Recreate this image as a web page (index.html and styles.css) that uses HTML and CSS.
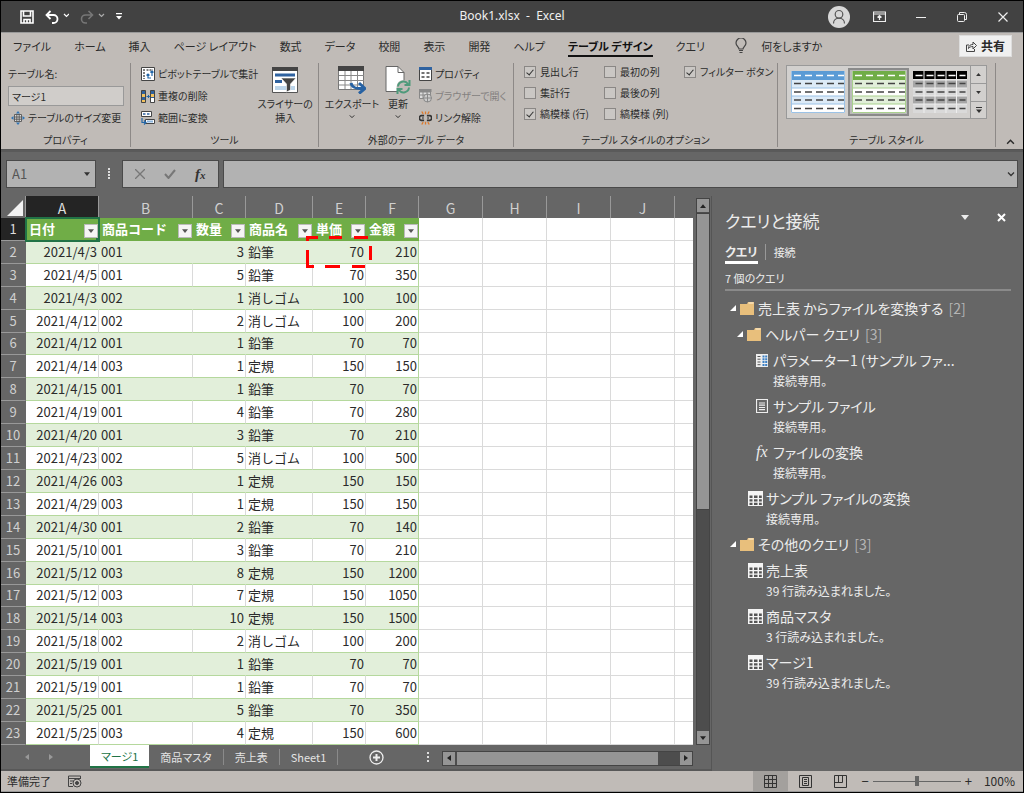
FILE: index.html
```html
<!DOCTYPE html>
<html lang="ja">
<head>
<meta charset="utf-8">
<title>Book1.xlsx - Excel</title>
<link rel="stylesheet" href="styles.css">
</head>
<body>
<svg class="defs" aria-hidden="true">
  <symbol id="caret" viewBox="0 0 8 5"><path d="M0 0h8L4 5z" fill="currentColor"/></symbol>
  <symbol id="chev" viewBox="0 0 8 5"><path d="M1 1l3 3 3-3" fill="none" stroke="currentColor" stroke-width="1.3"/></symbol>
  <symbol id="folder" viewBox="0 0 14 13"><path d="M0 2h7l1-2h6v13H0z" fill="#e8bf7c"/><path d="M8.500 1h5" stroke="#fff3dc"/></symbol>
  <symbol id="grid" viewBox="0 0 15 15"><path d="M0 0h15v15H0z" fill="#f5f5f5"/><path d="M1.500 4.500h3v2.500h-3zM6 4.500h3.500v2.500H6zM11 4.500h2.800v2.500H11zM1.500 8.200h3v2.300h-3zM6 8.200h3.500v2.300H6zM11 8.200h2.800v2.300H11zM1.500 11.700h3V14h-3zM6 11.700h3.500V14H6zM11 11.700h2.800V14H11z" fill="#555"/></symbol>
  <symbol id="node" viewBox="0 0 6 6"><path d="M6 0v6H0z" fill="#fff"/></symbol>
</svg>
<div class="app">
  <header class="titlebar">
    <div class="quick">
      <button aria-label="上書き保存"><svg width="14" height="14" viewBox="0 0 14 14" fill="none" stroke="#fff" stroke-width="1.600"><path d="M1 1h12v12H1zM3.500 1v5h7V1M4 13V9.500h6V13M7 10v3"/></svg></button>
      <button aria-label="元に戻す"><svg width="24" height="14" viewBox="0 0 24 14" fill="none" stroke="#fff" stroke-width="1.800"><path d="M5.500 1L1.500 5l4 4M2 5h6.500a4 4 0 0 1 0 8H7"/><path d="M19 4l2.500 2.500L24 4" stroke-width="1.200"/></svg></button>
      <button aria-label="やり直し"><svg width="25" height="14" viewBox="0 0 25 14" fill="none" stroke="#777" stroke-width="1.600"><path d="M8.500 1l4 4-4 4M12 5H5.500a4 4 0 0 0 0 8H7"/><path d="M19 4l2.500 2.500L24 4" stroke="#aaa" stroke-width="1.200"/></svg></button>
      <button aria-label="クイック アクセス ツール バーのカスタマイズ"><svg width="6" height="7" viewBox="0 0 6 7" fill="#fff"><path d="M0 0h6v1.300H0zM0 3h6L3 6.500z"/></svg></button>
    </div>
    <div class="doc-title">Book1.xlsx&nbsp; -&nbsp; Excel</div>
    <div class="window-buttons">
      <button class="avatar" aria-label="アカウント"><svg width="22" height="22" viewBox="0 0 22 22"><circle cx="11" cy="11" r="11" fill="#d8d8d8"/><g fill="none" stroke="#555" stroke-width="1.200"><circle cx="11" cy="8.300" r="3.800"/><path d="M5.500 17.500c0-7 11-7 11 0"/></g></svg></button>
      <button aria-label="リボンの表示オプション"><svg width="13" height="11" viewBox="0 0 13 11" fill="none" stroke="#eee"><path d="M.5 1h12v9.500H.5zM.5 3h12M6.500 9V5M4.500 6.500l2-2 2 2" stroke-width="1.200"/></svg></button>
      <button aria-label="最小化"><svg width="10" height="10"><path d="M0 5.500h10" stroke="#eee"/></svg></button>
      <button aria-label="元に戻す (縮小)"><svg width="10" height="10" viewBox="0 0 10 10" fill="none" stroke="#eee"><rect x=".5" y="2.500" width="7" height="7" rx="1"/><path d="M2.500 2V.5h5a2 2 0 0 1 2 2v5H8"/></svg></button>
      <button aria-label="閉じる"><svg width="10" height="10" viewBox="0 0 10 10"><path d="M.5.5l9 9M9.500.5l-9 9" stroke="#eee" stroke-width="1.200"/></svg></button>
    </div>
  </header>

  <nav class="tabs">
    <button>ファイル</button><button>ホーム</button><button>挿入</button><button>ページ レイアウト</button><button>数式</button><button>データ</button><button>校閲</button><button>表示</button><button>開発</button><button>ヘルプ</button><button class="current">テーブル デザイン</button><button>クエリ</button>
    <button class="tell"><svg width="12" height="16" viewBox="0 0 12 16" fill="none" stroke="#444" stroke-width="1.200"><path d="M4 11c0-2-3-3-3-6a5 5 0 0 1 10 0c0 3-3 4-3 6zM4 12.500h4M4.500 14.500h3"/></svg>何をしますか</button>
    <button class="share"><svg width="11" height="11" viewBox="0 0 11 11" fill="none" stroke="#444"><path d="M3 4H.5v6.500h8V8M2.500 7.500c0-3 2-4 4.500-4V1l3.500 3.500L7 8V5.500c-2 0-3.500.5-4.500 2z"/></svg>共有</button>
  </nav>

  <section class="ribbon">
    <div class="group g-prop">
      <div class="body stack">
        <label for="tname">テーブル名:</label>
        <input id="tname" class="tname" value="マージ1">
        <button class="cmd"><svg width="14" height="14" viewBox="0 0 14 14"><path d="M7 0l2 2.500H5zM7 14l2-2.500H5zM0 7l2.500-2v4zM14 7l-2.500-2v4z" fill="#2f74b5"/><path d="M3.500 3.500h7v7h-7zM3.500 6h7M3.500 8.200h7M5.800 3.500v7M8.200 3.500v7" fill="#ddd" stroke="#555" stroke-width=".9"/></svg>テーブルのサイズ変更</button>
      </div>
      <div class="caption">プロパティ</div>
    </div>
    <div class="group g-tool">
      <div class="body">
        <div class="stack">
          <button class="cmd"><svg width="14" height="14" viewBox="0 0 14 14"><path d="M.5.5h13v13H.5z" fill="#fff" stroke="#444"/><path d="M2 3h2M5.500 3H12M3 5v7" stroke="#555" stroke-width="1.500" stroke-dasharray="2 1"/><path d="M7 7v4h3M11 9V5H9M5.500 8.500L7 7l1.500 1.500M9.500 5.500L11 4l1.500 1.500" fill="none" stroke="#2266a8" stroke-width="1.200"/></svg>ピボットテーブルで集計</button>
          <button class="cmd"><svg width="14" height="13" viewBox="0 0 14 13"><path d="M.5.5h4v12h-4zM9.500.5h4v12h-4z" fill="#2f62a0" stroke="#444"/><path d="M1 4h3v3H1zM1 10h3v2H1zM10 4h3v3h-3z" fill="#f3c25f"/><path d="M10 8h3v4h-3z" fill="#fff"/><path d="M5.500 6.500h3M7 5l1.500 1.500L7 8" fill="none" stroke="#2266a8"/></svg>重複の削除</button>
          <button class="cmd"><svg width="14" height="14" viewBox="0 0 14 14"><path d="M.5.5h10v5H.5zM4.500 8.500h9v4h-9z" fill="#fff" stroke="#444"/><path d="M2 3h2.500M6 3h2.500" stroke="#2f62a0" stroke-width="1.500"/><path d="M6 10.500h6" stroke="#8cb4dc" stroke-width="2"/><path d="M1 7v4.500h3.500M3 9.500l2 2-2 2" fill="none" stroke="#2266a8" stroke-width="1.200"/></svg>範囲に変換</button>
        </div>
        <button class="big"><svg width="26" height="26" viewBox="0 0 26 26"><path d="M.5.5h25v25H.5z" fill="#fff" stroke="#555"/><path d="M0 0h26v4H0z" fill="#444"/><path d="M3 6.500h20v3H3zM3 13h7v3H3z" fill="#2f62a0"/><path d="M3 19h20v4H3z" fill="#bcd5ea"/><path d="M9 11h15l-5.500 6v6l-4 2v-8z" fill="#444" stroke="#fff" stroke-width=".6"/></svg><span>スライサーの<br>挿入</span></button>
      </div>
      <div class="caption">ツール</div>
    </div>
    <div class="group g-ext">
      <div class="body">
        <button class="big"><svg width="28" height="28" viewBox="0 0 28 28"><path d="M.5.5h25v23H.5z" fill="#fff" stroke="#777"/><path d="M0 0h26v5H0z" fill="#444"/><path d="M1 9.500h25M1 14.500h25M1 19h25M7 5v18M13 5v18M19.500 5v18" stroke="#888"/><path d="M13 17c1 5 5 6 12 5.500M21 17l6 5.500-6 5" fill="none" stroke="#2762a3" stroke-width="3"/></svg><span>エクスポート</span><svg class="down" width="6" height="4"><use href="#chev"/></svg></button>
        <button class="big slim"><svg width="26" height="28" viewBox="0 0 26 28"><path d="M1 .5h12l6 6v19H1z" fill="#fff" stroke="#666"/><path d="M13 .5v6h6" fill="none" stroke="#666"/><circle cx="18.500" cy="21" r="7" fill="#c0bbb7"/><path d="M13 20.500a5.500 5.500 0 0 1 10-2.500M24 21.500a5.500 5.500 0 0 1-10 2.500M24.500 14v5h-5M12.500 28v-5h5" fill="none" stroke="#4f9a7b" stroke-width="2"/></svg><span>更新</span><svg class="down" width="6" height="4"><use href="#chev"/></svg></button>
        <div class="stack">
          <button class="cmd"><svg width="13" height="14" viewBox="0 0 13 14"><path d="M.5.5h12v13H.5z" fill="#fff" stroke="#444"/><path d="M0 0h13v3H0z" fill="#2f62a0"/><path d="M2.500 6h3M2.500 10h3M7.500 6h3M7.500 10h3" stroke="#444" stroke-width="1.500"/></svg>プロパティ</button>
          <button class="cmd" disabled><svg width="13" height="14" viewBox="0 0 13 14"><path d="M.5.5h11v9H.5z" fill="#ddd" stroke="#888"/><path d="M0 0h12v3H0zM4 3v6M8 3v6M1 6h11" fill="#888" stroke="#888"/><circle cx="8.500" cy="9" r="4" fill="#ccc" stroke="#888"/><path d="M4.500 9h8M8.500 5v8" stroke="#888"/></svg>ブラウザーで開く</button>
          <button class="cmd"><svg width="13" height="14" viewBox="0 0 14 14" fill="none"><path d="M5.500 4.500h-3a2 2 0 0 0-2 2v1a2 2 0 0 0 2 2h3M8.500 4.500h3a2 2 0 0 1 2 2v1a2 2 0 0 1-2 2h-3M3.500 7h1.500M9 7h1.500" stroke="#333" stroke-width="1.800"/><path d="M7 0v3M3 0l1.500 2.500M11 0L9.500 2.500M7 14v-3M3 14l1.500-2.500M11 14l-1.500-2.500" stroke="#dd7a2c" stroke-width="1.400"/></svg>リンク解除</button>
        </div>
      </div>
      <div class="caption">外部のテーブル データ</div>
    </div>
    <div class="group g-opt">
      <div class="body checks">
        <label><input type="checkbox" checked>見出し行</label>
        <label><input type="checkbox">最初の列</label>
        <label><input type="checkbox" checked>フィルター ボタン</label>
        <label><input type="checkbox">集計行</label>
        <label><input type="checkbox">最後の列</label><i></i>
        <label><input type="checkbox" checked>縞模様 (行)</label>
        <label><input type="checkbox">縞模様 (列)</label>
      </div>
      <div class="caption">テーブル スタイルのオプション</div>
    </div>
    <div class="group g-style">
      <div class="body">
        <div class="gallery">
          <button aria-label="青"><svg width="54" height="42" viewBox="0 0 54 42"><path d="M0 0h54v42H0z" fill="#fff"/><path d="M0 0h54v9H0z" fill="#5b9bd5"/><path d="M0 9h54v8H0zM0 25h54v8H0z" fill="#ddebf7"/><path d="M.5 0v41.500h53V0M0 17h54M0 25h54M0 33h54" fill="none" stroke="#9bc2e6"/><path d="M3 4.500h50" stroke="#fff" stroke-dasharray="7 4" stroke-width="1.500"/><path d="M3 12.500h50M3 21h50M3 29h50M3 37.500h50" stroke="#444" stroke-dasharray="7 4" stroke-width="1.500"/></svg></button>
          <button class="chosen" aria-label="緑"><svg width="54" height="42" viewBox="0 0 54 42"><path d="M0 0h54v42H0z" fill="#fff"/><path d="M0 0h54v9H0z" fill="#70ad47"/><path d="M0 9h54v8H0zM0 25h54v8H0z" fill="#e2efda"/><path d="M.5 0v41.500h53V0M0 17h54M0 25h54M0 33h54" fill="none" stroke="#a9d08e"/><path d="M3 4.500h50" stroke="#fff" stroke-dasharray="7 4" stroke-width="1.500"/><path d="M3 12.500h50M3 21h50M3 29h50M3 37.500h50" stroke="#444" stroke-dasharray="7 4" stroke-width="1.500"/></svg></button>
          <button aria-label="黒"><svg width="54" height="42" viewBox="0 0 54 42"><path d="M0 0h54v42H0z" fill="#d9d9d9"/><path d="M0 9h54v8H0zM0 25h54v8H0z" fill="#a6a6a6"/><path d="M0 0h54v8H0z" fill="#000"/><path d="M11 0v42M22 0v42M33 0v42M43.500 0v42M0 9h54M0 17h54M0 25h54M0 33h54" stroke="#eee"/><path d="M2.500 4.500h50" stroke="#fff" stroke-dasharray="7 4" stroke-width="1.500"/><path d="M2.500 12.500h50M2.500 21h50M2.500 29h50M2.500 37.500h50" stroke="#444" stroke-dasharray="7 4" stroke-width="1.500"/></svg></button>
          <div class="pager">
            <button aria-label="前へ"><svg class="flip" width="5" height="3"><use href="#caret"/></svg></button>
            <button aria-label="次へ"><svg width="5" height="3"><use href="#caret"/></svg></button>
            <button aria-label="その他"><svg width="6" height="6" viewBox="0 0 6 6"><path d="M0 0h6v1H0zM0 2.500h6L3 6z" fill="#333"/></svg></button>
          </div>
        </div>
      </div>
      <div class="caption">テーブル スタイル</div>
    </div>
    <button class="collapse" aria-label="リボンを折りたたむ"><svg class="flip" width="9" height="6"><use href="#chev"/></svg></button>
  </section>

  <section class="formula">
    <div class="field namebox"><input aria-label="名前ボックス" value="A1"><svg width="6" height="4"><use href="#caret"/></svg></div>
    <svg class="dots" width="2" height="12"><path d="M1 0v12" stroke="#ddd" stroke-width="2" stroke-dasharray="2 1"/></svg>
    <div class="field fxbox">
      <button aria-label="キャンセル"><svg width="10" height="10"><path d="M0 0l10 10M10 0L0 10" stroke="#777" stroke-width="1.300"/></svg></button>
      <button aria-label="入力"><svg width="12" height="10"><path d="M1 5l3.500 4L11 1" fill="none" stroke="#777" stroke-width="2"/></svg></button>
      <button class="fx" aria-label="関数の挿入">f<small>x</small></button>
    </div>
    <div class="field bar"><input aria-label="数式バー"><svg width="8" height="6"><use href="#chev"/></svg></div>
  </section>

  <main class="work">
    <section class="left">
      <div class="sheet-row">
        <div class="sheet">
        <table>
          <colgroup><col class="c0"><col class="ca"><col class="cb"><col class="cc"><col class="cd"><col class="cc"><col class="cc"><col class="cg"><col class="cg"><col class="cg"><col class="cg"><col></colgroup>
          <thead><tr><th class="corner"><svg width="16" height="16"><path d="M16 0v16H0z" fill="#f2f2f2"/></svg></th><th class="on">A</th><th>B</th><th>C</th><th>D</th><th>E</th><th>F</th><th>G</th><th>H</th><th>I</th><th>J</th><th></th></tr></thead>
          <tbody>
            <tr class="head"><th class="on">1</th><td class="active"><div>日付<button aria-label="日付"><svg width="6" height="4"><use href="#caret"/></svg></button></div></td><td><div>商品コード<button aria-label="商品コード"><svg width="6" height="4"><use href="#caret"/></svg></button></div></td><td><div>数量<button aria-label="数量"><svg width="6" height="4"><use href="#caret"/></svg></button></div></td><td><div>商品名<button aria-label="商品名"><svg width="6" height="4"><use href="#caret"/></svg></button></div></td><td><div>単価<button aria-label="単価"><svg width="6" height="4"><use href="#caret"/></svg></button></div></td><td><div>金額<button aria-label="金額"><svg width="6" height="4"><use href="#caret"/></svg></button></div></td><td><td><td><td><td></tr>
            <tr><th>2<td>2021/4/3<td>001<td>3<td>鉛筆<td class="marked">70<svg class="marker" width="66" height="32" viewBox="0 0 66 32"><path d="M0 1.500h12M23 1.500h13M48 1.500h14M0 30.500h8M19 30.500h15M46 30.500h13M1.500 1v4M1.500 14v16M64.500 10v14" stroke="#f00" stroke-width="3"/></svg><td>210<td><td><td><td><td></tr>
            <tr><th>3<td>2021/4/5<td>001<td>5<td>鉛筆<td>70<td>350<td><td><td><td><td></tr>
            <tr><th>4<td>2021/4/3<td>002<td>1<td>消しゴム<td>100<td>100<td><td><td><td><td></tr>
            <tr><th>5<td>2021/4/12<td>002<td>2<td>消しゴム<td>100<td>200<td><td><td><td><td></tr>
            <tr><th>6<td>2021/4/12<td>001<td>1<td>鉛筆<td>70<td>70<td><td><td><td><td></tr>
            <tr><th>7<td>2021/4/14<td>003<td>1<td>定規<td>150<td>150<td><td><td><td><td></tr>
            <tr><th>8<td>2021/4/15<td>001<td>1<td>鉛筆<td>70<td>70<td><td><td><td><td></tr>
            <tr><th>9<td>2021/4/19<td>001<td>4<td>鉛筆<td>70<td>280<td><td><td><td><td></tr>
            <tr><th>10<td>2021/4/20<td>001<td>3<td>鉛筆<td>70<td>210<td><td><td><td><td></tr>
            <tr><th>11<td>2021/4/23<td>002<td>5<td>消しゴム<td>100<td>500<td><td><td><td><td></tr>
            <tr><th>12<td>2021/4/26<td>003<td>1<td>定規<td>150<td>150<td><td><td><td><td></tr>
            <tr><th>13<td>2021/4/29<td>003<td>1<td>定規<td>150<td>150<td><td><td><td><td></tr>
            <tr><th>14<td>2021/4/30<td>001<td>2<td>鉛筆<td>70<td>140<td><td><td><td><td></tr>
            <tr><th>15<td>2021/5/10<td>001<td>3<td>鉛筆<td>70<td>210<td><td><td><td><td></tr>
            <tr><th>16<td>2021/5/12<td>003<td>8<td>定規<td>150<td>1200<td><td><td><td><td></tr>
            <tr><th>17<td>2021/5/12<td>003<td>7<td>定規<td>150<td>1050<td><td><td><td><td></tr>
            <tr><th>18<td>2021/5/14<td>003<td>10<td>定規<td>150<td>1500<td><td><td><td><td></tr>
            <tr><th>19<td>2021/5/18<td>002<td>2<td>消しゴム<td>100<td>200<td><td><td><td><td></tr>
            <tr><th>20<td>2021/5/19<td>001<td>1<td>鉛筆<td>70<td>70<td><td><td><td><td></tr>
            <tr><th>21<td>2021/5/19<td>001<td>1<td>鉛筆<td>70<td>70<td><td><td><td><td></tr>
            <tr><th>22<td>2021/5/25<td>001<td>5<td>鉛筆<td>70<td>350<td><td><td><td><td></tr>
            <tr><th>23<td>2021/5/25<td>003<td>4<td>定規<td>150<td>600<td><td><td><td><td></tr>
          </tbody>
        </table>
        </div>
        <div class="vscroll">
          <button aria-label="上へ"><svg class="flip" width="6" height="4"><use href="#caret"/></svg></button>
          <div class="thumb"></div><div class="track"></div>
          <button aria-label="下へ"><svg width="6" height="4"><use href="#caret"/></svg></button>
        </div>
      </div>
      <div class="sheet-tabs">
        <div class="nav">
          <button aria-label="前のシート"><svg width="4" height="6"><path d="M4 0v6L0 3z" fill="#999"/></svg></button>
          <button aria-label="次のシート"><svg width="4" height="6"><path d="M0 0v6l4-3z" fill="#999"/></svg></button>
        </div>
        <button class="tab current">マージ1</button><button class="tab">商品マスタ</button><button class="tab">売上表</button><button class="tab">Sheet1</button>
        <button class="add" aria-label="新しいシート"><svg width="15" height="15" viewBox="0 0 15 15" fill="none" stroke="#eee"><circle cx="7.500" cy="7.500" r="6.500" stroke-width="1.300"/><path d="M7.500 4v7M4 7.500h7" stroke-width="2"/></svg></button>
        <svg class="dots" width="2" height="10"><path d="M1 0v10" stroke="#ddd" stroke-width="2" stroke-dasharray="2 2"/></svg>
        <div class="hscroll">
          <button aria-label="左へ"><svg width="4" height="6"><path d="M4 0v6L0 3z" fill="#222"/></svg></button>
          <div class="thumb"></div><div class="track"></div>
          <button aria-label="右へ"><svg width="4" height="6"><path d="M0 0v6l4-3z" fill="#222"/></svg></button>
        </div>
      </div>
    </section>

    <aside class="panel">
      <div class="panel-head"><h2>クエリと接続</h2>
        <button aria-label="オプション"><svg width="8" height="5"><use href="#caret"/></svg></button>
        <button aria-label="閉じる"><svg width="9" height="9" viewBox="0 0 9 9"><path d="M1 1l7 7M8 1L1 8" stroke="#fff" stroke-width="2"/></svg></button>
      </div>
      <div class="panel-tabs"><button class="current">クエリ</button><button>接続</button></div>
      <p class="count">7 個のクエリ</p>
      <ul class="tree">
        <li><div class="row"><svg class="tw" width="6" height="6"><use href="#node"/></svg><svg width="14" height="13"><use href="#folder"/></svg><span>売上表 からファイルを変換する <em>[2]</em></span></div>
          <ul>
            <li><div class="row"><svg class="tw" width="6" height="6"><use href="#node"/></svg><svg width="14" height="13"><use href="#folder"/></svg><span>ヘルパー クエリ <em>[3]</em></span></div>
              <ul>
                <li class="leaf"><div class="row"><svg width="12" height="13" viewBox="0 0 12 13"><path d="M0 0h12v13H0z" fill="#eee"/><path d="M1.500 2.500h3M1.500 5.200h3M1.500 8h3M1.500 10.700h3" stroke="#555"/><path d="M6.500 1.500h2v2h-2zM9.200 1.500h2v2h-2zM6.500 4.300h2v2h-2zM9.200 4.300h2v2h-2zM6.500 7.100h2v2h-2zM9.200 7.100h2v2h-2zM6.500 10h2v2h-2zM9.200 10h2v2h-2z" fill="#3b7fc4"/></svg><span>パラメーター1 (サンプル ファ...</span></div><p>接続専用。</p></li>
                <li class="leaf"><div class="row"><svg width="12" height="14" viewBox="0 0 12 14" fill="none" stroke="#eee"><path d="M.5.5h11v13H.5zM3 4h6M3 6.200h6M3 8.500h6M3 10.700h6" stroke-width="1.200"/></svg><span>サンプル ファイル</span></div><p>接続専用。</p></li>
                <li class="leaf"><div class="row"><i class="fn">fx</i><span>ファイルの変換</span></div><p>接続専用。</p></li>
              </ul>
            </li>
            <li class="leaf"><div class="row"><svg width="15" height="15"><use href="#grid"/></svg><span>サンプル ファイルの変換</span></div><p>接続専用。</p></li>
          </ul>
        </li>
        <li><div class="row"><svg class="tw" width="6" height="6"><use href="#node"/></svg><svg width="14" height="13"><use href="#folder"/></svg><span>その他のクエリ <em>[3]</em></span></div>
          <ul>
            <li class="leaf"><div class="row"><svg width="15" height="15"><use href="#grid"/></svg><span>売上表</span></div><p>39 行読み込まれました。</p></li>
            <li class="leaf"><div class="row"><svg width="15" height="15"><use href="#grid"/></svg><span>商品マスタ</span></div><p>3 行読み込まれました。</p></li>
            <li class="leaf"><div class="row"><svg width="15" height="15"><use href="#grid"/></svg><span>マージ1</span></div><p>39 行読み込まれました。</p></li>
          </ul>
        </li>
      </ul>
    </aside>
  </main>

  <footer class="status">
    <span>準備完了</span>
    <button class="macro" aria-label="マクロの記録"><svg width="14" height="13" viewBox="0 0 14 13" fill="none" stroke="#444"><path d="M5 11.500H.5V1h12v3M.5 3.500h12M2 6h3M2 8.500h2"/><circle cx="9" cy="8" r="4"/><circle cx="9" cy="8" r="1.500" fill="#444"/></svg></button>
    <div class="views">
      <button class="current" aria-label="標準"><svg width="13" height="13" viewBox="0 0 13 13" fill="none" stroke="#333"><path d="M.5.5h12v12H.5zM.5 4.500h12M.5 8.500h12M4.500.5v12M8.500.5v12"/></svg></button>
      <button aria-label="ページ レイアウト"><svg width="13" height="13" viewBox="0 0 13 13" fill="none" stroke="#333"><path d="M.5.5h12v12H.5zM3.500 2.500h6v8h-6zM5 4.500h3M5 6.500h3M5 8.500h3"/></svg></button>
      <button aria-label="改ページ プレビュー"><svg width="13" height="13" viewBox="0 0 13 13" fill="none" stroke="#333"><path d="M.5.5h12v12H.5zM.5 7.500h8v-7M4.500.5v7"/></svg></button>
    </div>
    <div class="zoom"><button aria-label="縮小">−</button><input type="range" aria-label="ズーム" min="0" max="100" value="50"><button aria-label="拡大">+</button><span>100%</span></div>
  </footer>
</div>
</body>
</html>
```
FILE: styles.css
```css
* { box-sizing: border-box; }
body { margin: 0; background: #000; color: #2b2b2b; font: 11px/14px "Noto Sans CJK JP", sans-serif; font-feature-settings: "palt"; }
button, input { font: inherit; font-feature-settings: inherit; color: inherit; background: none; border: 0; padding: 0; margin: 0; }
svg { display: block; flex: none; }
ul, p, h2 { margin: 0; padding: 0; list-style: none; }
.defs { position: absolute; width: 0; height: 0; }
.flip { transform: rotate(180deg); }

.app { min-height: 100vh; display: flex; flex-direction: column; border: 1px solid #000; background: #666; }

.titlebar { height: 31px; display: grid; grid-template-columns: 1fr auto 1fr; align-items: center; background: #424242; color: #f0f0f0; }
.quick { display: flex; align-items: center; gap: 11px; padding-left: 19px; }
.doc-title { font: 12px/16px "Noto Sans", sans-serif; padding-bottom: 2px; }
.window-buttons { display: flex; align-items: center; justify-content: flex-end; }
.window-buttons button { width: 41px; display: flex; justify-content: center; }

.tabs { height: 29px; display: flex; align-items: center; gap: 23px; padding: 0 11px 2px 12px; background: #c0bbb7; white-space: nowrap; border-top: 1px solid #999; }
.tabs button { height: 22px; }
.tabs .current { font-weight: 700; color: #111; border-bottom: 2px solid #111; border-top: 2px solid transparent; }
.tell { display: flex; align-items: center; gap: 14px; padding-left: 7px; }
.tabs .share { margin-left: auto; display: flex; align-items: center; gap: 4px; padding: 0 6px; background: #f0f0f0; border: 1px solid #ddd; font-size: 12px; font-weight: 700; }

.ribbon { display: flex; background: #c0bbb7; height: 89px; padding: 2px 0; border-bottom: 1px solid #555; white-space: nowrap; font-size: 10px; }
.group { border-right: 1px solid #8d8987; display: flex; flex-direction: column; }
.body { flex: 1; display: flex; }
.caption { text-align: center; line-height: 14px; }
.stack { display: flex; flex-direction: column; gap: 2px; }
.cmd { display: flex; align-items: center; gap: 3px; height: 20px; }
.cmd:disabled { color: #848180; }
.stack label { height: 20px; line-height: 20px; }
.big { display: flex; flex-direction: column; align-items: center; gap: 3px; padding-top: 2px; width: 54px; }
.big.slim { width: 34px; }
.big svg { height: 28px; }
.big .down { height: 5px; }
.g-prop { width: 130px; }
.g-prop .body { padding: 1px 6px 0 7px; }
.g-prop .cmd { padding-left: 3px; }
.tname { height: 20px; background: #d0cdca; border: 1px solid #999; padding: 0 3px; }
.g-tool { width: 188px; }
.g-tool .body { padding: 1px 6px 0 10px; justify-content: space-between; }
.g-ext { width: 195px; }
.g-ext .body { padding: 1px 0 0 6px; gap: 2px; }
.g-ext .stack { padding-left: 2px; }
.g-opt { width: 264px; }
.checks { display: grid; grid-template-columns: 80px 80px auto; grid-auto-rows: 16px; row-gap: 5px; padding: 1px 0 0 10px; align-items: center; }
.checks label { display: flex; align-items: center; gap: 4px; }
.checks input { appearance: none; width: 12px; height: 12px; border: 1px solid #8a8785; background: #cac7c4; display: flex; align-items: center; justify-content: center; }
.checks input:checked::after { content: ""; width: 3px; height: 6px; border: solid #333; border-width: 0 1px 1px 0; transform: rotate(40deg); margin-bottom: 2px; }
.g-style { width: 218px; }
.g-style .body { padding: 2px 8px 0; }
.gallery { display: flex; flex: 1; height: 54px; background: #d2d0ce; border: 1px solid #999; }
.gallery > button { width: 61px; display: flex; align-items: center; justify-content: center; border: 2px solid transparent; margin: 2px 0; }
.gallery > .chosen { border-color: #8a8a8a; background: #bbb; }
.pager { flex: 1; display: grid; grid-template-rows: 1fr 1fr 1fr; border-left: 1px solid #999; }
.pager button { display: flex; align-items: center; justify-content: center; color: #333; }
.pager button + button { border-top: 1px solid #999; }
.collapse { margin: auto 8px 2px auto; }

.formula { display: flex; align-items: center; gap: 4px; height: 46px; padding: 0 5px; background: #666; border-top: 2px solid #5a5a5a; }
.field { height: 28px; background: #b2b2b2; border: 1px solid #4a4a4a; display: flex; align-items: center; color: #333; }
.field input { flex: 1; min-width: 0; }
.namebox { width: 90px; padding: 0 5px; font-size: 13px; }
.namebox input { color: #555; }
.formula .dots { margin: 0 8px; }
.fxbox { width: 97px; justify-content: space-around; padding: 0 3px; }
.fx { font: italic 700 15px/16px "Liberation Serif", serif; }
.fx small { font-size: 11px; }
.bar { flex: 1; padding: 0 2px; }

.work { flex: 1; display: flex; }
.left { flex: 1; min-width: 0; display: flex; flex-direction: column; }
.sheet-row { flex: 1; display: flex; gap: 3px; padding-right: 1px; }
.sheet { flex: 1; min-width: 0; display: flex; }
table { width: 100%; table-layout: fixed; border-collapse: separate; border-spacing: 0; font-size: 13px; line-height: 18px; font-feature-settings: normal; }
.c0 { width: 25px; } .ca { width: 73px; } .cb { width: 94px; } .cc { width: 53px; } .cd { width: 67px; } .cg { width: 64px; }
th { padding: 0; font-weight: 400; background: #666; color: #d0d0d0; border-right: 1px solid #999; text-align: center; }
thead th { height: 22px; padding-top: 1px; font-size: 14px; }
thead th:last-child { border-right: 0; }
.corner svg { margin-left: 6px; }
tbody th { border-right-color: #666; border-bottom: 1px solid #999; height: 22px; }
th.on { background: #242424; color: #ddd; }
td { padding: 0 2px; background: #fff; border-right: 1px solid #dadada; border-bottom: 1px solid #dadada; white-space: nowrap; height: 22px; }
td:nth-child(12) { border-right: 0; }
td:nth-child(-n+7) { border-bottom-color: #b5d89d; }
td:nth-child(7) { border-right-color: #b5d89d; }
td:nth-child(2), td:nth-child(4), td:nth-child(6), td:nth-child(7) { text-align: right; padding-right: 1px; }
tbody tr:nth-child(even) td:nth-child(-n+7) { background: #e2efda; border-right-color: #e2efda; }
tbody tr:nth-child(even) td:nth-child(7) { border-right-color: #b5d89d; }
.head td:nth-child(-n+7) { background: #70ad47; border-color: #70ad47; color: #fff; font-weight: 700; padding: 0 0 0 3px; }
.head div { display: flex; justify-content: space-between; align-items: flex-end; }
.head button { width: 14px; height: 14px; background: #f5f5f5; border: 1px solid #bbb; color: #555; display: flex; align-items: center; justify-content: center; }
.head td.active { outline: 2px solid #217346; outline-offset: -1px; position: relative; }
.active::after { content: ""; position: absolute; right: -2px; bottom: -2px; width: 4px; height: 4px; background: #217346; }
.marked { position: relative; }
.marker { position: absolute; left: -7px; top: -5px; z-index: 1; }

.vscroll, .hscroll { display: flex; background: #4d4d4d; border: 1px solid #444; }
.vscroll { width: 14px; flex-direction: column; margin-top: 2px; }
.vscroll button, .hscroll button { width: 12px; height: 13px; background: #959595; display: flex; align-items: center; justify-content: center; color: #222; }
.thumb { background: #959595; }
.vscroll .thumb { flex: 4; border-top: 1px solid #444; border-bottom: 1px solid #444; margin-top: 1px; }
.vscroll .track { flex: 3; }
.hscroll .thumb { flex: 9; margin-left: 2px; }
.hscroll .track { flex: 1; }

.sheet-tabs { height: 26px; display: flex; align-items: center; color: #e4e4e4; border-bottom: 2px solid #585858; }
.nav { width: 89px; display: flex; gap: 20px; padding-left: 24px; }
.tab { padding: 0 11px; height: 16px; line-height: 16px; border-right: 1px solid #8a8a8a; }
.tab.current { align-self: flex-start; height: 23px; background: #fff; color: #217346; border-right: 0; border-bottom: 2px solid #217346; }
.add { margin-left: 31px; }
.sheet-tabs .dots { margin-left: auto; }
.hscroll { width: 251px; height: 15px; margin: 2px 18px 0 13px; }

.panel { width: 312px; border-left: 1px solid #555; padding: 12px 12px 0 13px; color: #ececec; }
.panel-head { display: flex; gap: 28px; padding-right: 5px; }
h2 { flex: 1; font-size: 17px; line-height: 26px; font-weight: 400; }
.panel-head button { height: 18px; }
.panel-tabs { display: flex; align-items: center; padding-top: 9px; }
.panel-tabs button { height: 21px; font-size: 12px; line-height: 16px; }
.panel-tabs .current { font-weight: 700; border-bottom: 3px solid #fff; }
.panel-tabs button + button { font-size: 11px; margin-left: 7px; padding-left: 8px; border-left: 1px solid #999; height: 16px; margin-bottom: 4px; }
.count { margin-top: 6px; padding-bottom: 3px; border-bottom: 2px solid #8a8a8a; line-height: 16px; }
.tree { padding-top: 4px; font-size: 14px; white-space: nowrap; }
.tree ul { padding-left: 7px; }
.row { display: flex; align-items: center; height: 26px; gap: 4px; padding-left: 5px; }
.row em { font-style: normal; color: #b5b5b5; margin-left: 2px; }
.leaf > .row { padding-left: 16px; gap: 3px; }
.leaf p { font-size: 12px; line-height: 16px; padding: 0 0 4px 34px; }
.tree ul ul .leaf .row { gap: 5px; padding-left: 17px; }
.fn { width: 12px; font: italic 16px/20px "Liberation Serif", serif; }

.status { height: 21px; display: flex; align-items: center; background: #c0bbb7; padding: 0 8px 0 6px; border-bottom: 1px solid #999; }
.macro { margin-left: 17px; }
.views { margin-left: auto; display: flex; align-self: stretch; }
.views button { width: 35px; display: flex; align-items: center; justify-content: center; }
.views .current { background: #a3a09d; }
.zoom { display: flex; align-items: center; gap: 4px; margin-left: 4px; }
.zoom button { font-size: 13px; }
.zoom span { margin-left: 8px; font-size: 12px; }
.zoom input { appearance: none; width: 88px; height: 14px; background: linear-gradient(#666, #666) center / 100% 1px no-repeat; }
.zoom input::-webkit-slider-thumb { appearance: none; width: 4px; height: 10px; background: #666; }
```
